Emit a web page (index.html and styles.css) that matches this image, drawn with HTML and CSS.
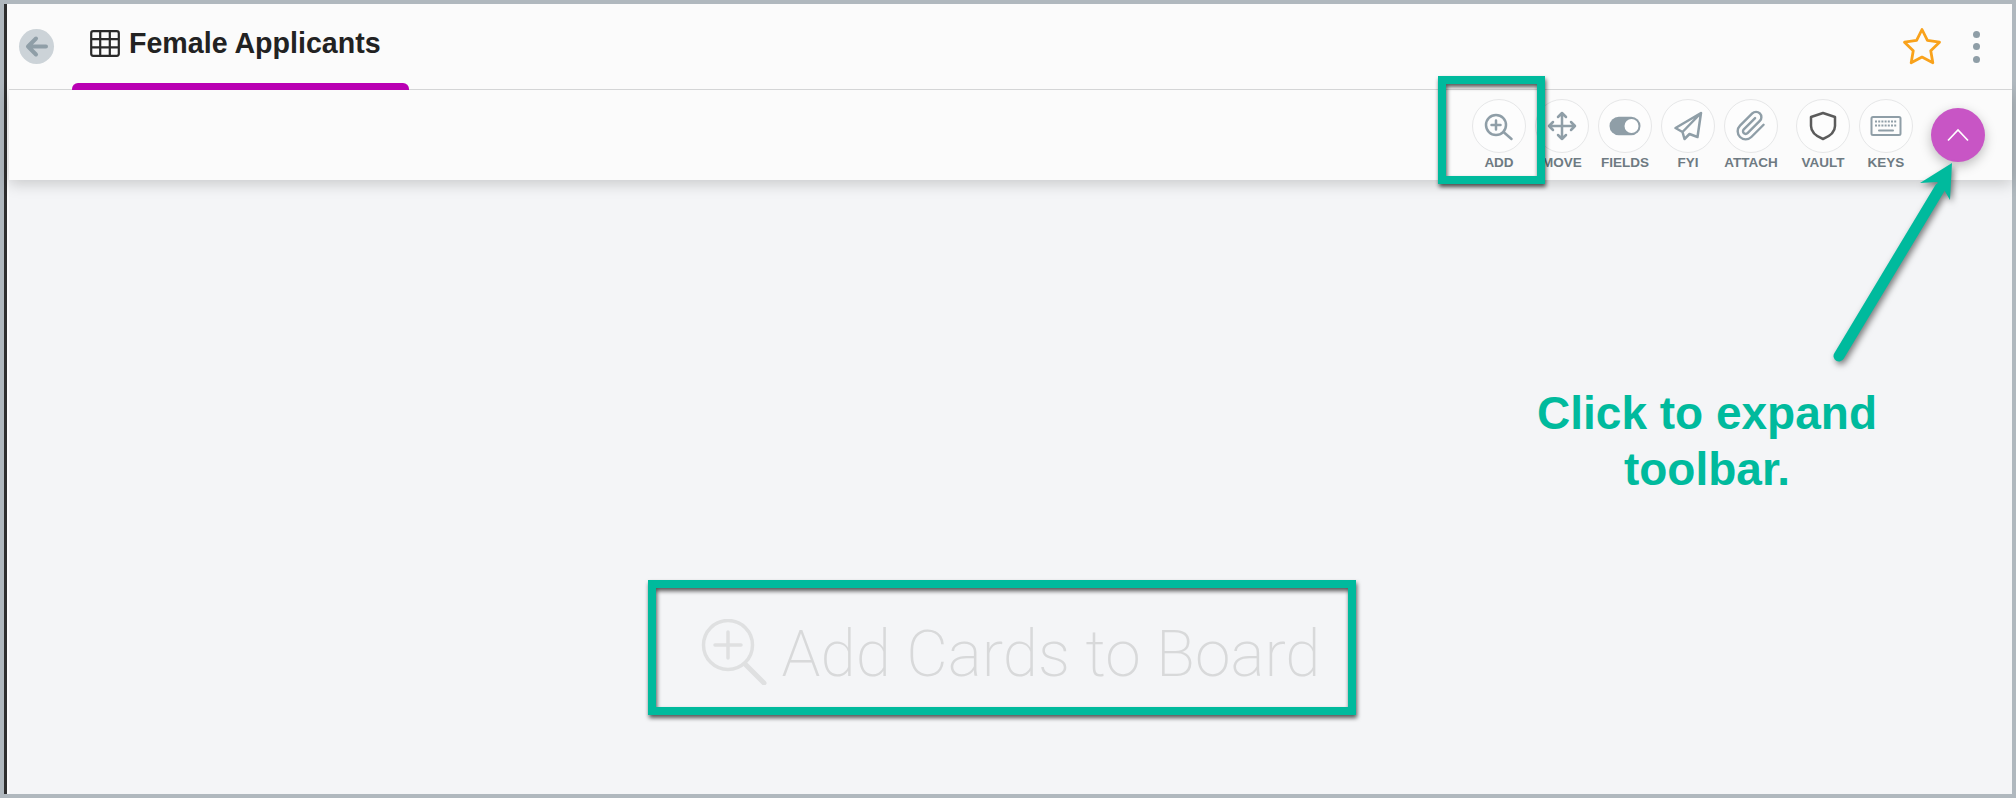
FILE: index.html
```html
<!DOCTYPE html>
<html lang="en">

<head>
    <meta charset="UTF-8">
    <title>Female Applicants</title>
    <link rel="stylesheet" href="styles.css">
</head>

<body>
    <div class="app">
        <header class="head">
            <button class="back">
                <svg width="25" height="25" viewBox="0 0 25 25"><path d="M22 12.5H4M12 4.5l-8 8 8 8" /></svg>
            </button>
            <div class="tab">
                <div class="tab-title">
                    <svg class="grid-icon" width="30" height="27" viewBox="0 0 30 27">
                        <rect x="1.2" y="1.2" width="27.6" height="24.6" rx="2" />
                        <path d="M1 9.2h28M1 17.4h28M10.2 1v25M19.8 1v25" />
                    </svg>
                    <h1>Female Applicants</h1>
                </div>
                <div class="tab-bar"></div>
            </div>
            <div class="head-right">
                <svg class="star" width="42" height="42" viewBox="0 0 24 24">
                    <polygon points="12 2 15.09 8.26 22 9.27 17 14.14 18.18 21.02 12 17.77 5.82 21.02 7 14.14 2 9.27 8.91 8.26 12 2" />
                </svg>
                <div class="dots"><span></span><span></span><span></span></div>
            </div>
        </header>

        <nav class="toolbar">
            <div class="tool">
                <div class="tool-icon">
                    <svg width="32" height="32" viewBox="0 0 32 32">
                        <circle cx="13" cy="15" r="10" />
                        <path d="M13 10.500v9M8.500 15h9M20.500 22l8 7" />
                    </svg>
                </div>
                <span>ADD</span>
            </div>
            <div class="tool">
                <div class="tool-icon">
                    <svg width="32" height="32" viewBox="0 0 32 32">
                        <path d="M3 16h26M16 3v26M12 7l4-4 4 4M12 25l4 4 4-4M7 12l-4 4 4 4M25 12l4 4-4 4" />
                    </svg>
                </div>
                <span>MOVE</span>
            </div>
            <div class="tool">
                <div class="tool-icon">
                    <svg width="32" height="32" viewBox="0 0 32 32">
                        <rect class="solid" x="0.5" y="6.7" width="31" height="18.6" rx="9.3" />
                        <circle class="knob" cx="22.5" cy="16" r="7" />
                    </svg>
                </div>
                <span>FIELDS</span>
            </div>
            <div class="tool">
                <div class="tool-icon">
                    <svg width="32" height="32" viewBox="0 0 32 32">
                        <path d="M29 3L3.5 18l7 4 2 7 5-5 8 3zM29 3L10.500 22" />
                    </svg>
                </div>
                <span>FYI</span>
            </div>
            <div class="tool tool-wide">
                <div class="tool-icon">
                    <svg width="32" height="32" viewBox="0 0 24 24">
                        <path class="thin" d="M21.44 11.05l-9.19 9.19a6 6 0 0 1-8.49-8.49l9.19-9.19a4 4 0 0 1 5.66 5.66l-9.2 9.19a2 2 0 0 1-2.83-2.83l8.49-8.48" />
                    </svg>
                </div>
                <span>ATTACH</span>
            </div>
            <div class="tool">
                <div class="tool-icon">
                    <svg class="shield" width="32" height="32" viewBox="0 0 32 32">
                        <path d="M16 3l12 4v9c0 7-7 11-12 13C11 27 4 23 4 16V7z" />
                    </svg>
                </div>
                <span>VAULT</span>
            </div>
            <div class="tool">
                <div class="tool-icon">
                    <svg width="32" height="32" viewBox="0 0 32 32">
                        <rect class="key-body" x="1.500" y="7" width="29" height="18" rx="1.500" />
                        <path class="key-row" d="M5 11.500h22M5 15.500h22" />
                        <path class="key-bar" d="M9 20.500h14" />
                    </svg>
                </div>
                <span>KEYS</span>
            </div>
            <button class="fab">
                <svg width="24" height="14" viewBox="0 0 24 14"><path d="M2 12.500L12 2l10 10.500" /></svg>
            </button>
        </nav>

        <main class="board">
            <div class="empty">
                <svg width="66" height="66" viewBox="0 0 66 66">
                    <circle cx="27" cy="26" r="24.500" />
                    <path d="M27 13v26M14 26h26" />
                    <path class="empty-handle" d="M45 46l18 18" />
                </svg>
                <span>Add Cards to Board</span>
            </div>
        </main>
    </div>

    <!-- annotations drawn over the screenshot -->
    <div class="callout callout-add"></div>
    <div class="callout callout-empty"></div>
    <svg class="arrow" width="140" height="210" viewBox="0 0 140 210">
        <path class="arrow-line" d="M9 198L110 30" />
        <path class="arrow-head" d="M122 5L90 25l17-1 6 6 7 12z" />
    </svg>
    <p class="hint">Click to expand<br>toolbar.</p>
</body>

</html>
```

FILE: styles.css
```css
* {
    box-sizing: border-box;
}

body {
    margin: 0;
    height: 798px;
    padding: 4px;
    background: #b0b8be;
    font-family: 'Liberation Sans', Arial, sans-serif;
    overflow: hidden;
}

svg {
    display: block;
}

button {
    border: none;
    padding: 0;
    cursor: pointer;
}

.app {
    display: flex;
    flex-direction: column;
    height: 790px;
    padding-left: 2px;
    background: #fbfbfb;
    border-left: 3px solid #2e2e2e;
}

.head {
    position: relative;
    z-index: 2;
    display: flex;
    height: 86px;
    background: #fbfbfb;
    border-bottom: 1px solid #d4d5d6;
}

.back {
    display: flex;
    align-items: center;
    justify-content: center;
    align-self: center;
    flex: none;
    width: 35px;
    height: 35px;
    margin-left: 9.500px;
    border-radius: 50%;
    background: #ccd3d8;

    path {
        fill: none;
        stroke: #8f9ea7;
        stroke-width: 4;
        stroke-linecap: round;
        stroke-linejoin: round;
    }
}

.tab {
    display: flex;
    flex-direction: column;
    width: 337px;
    margin-left: 18.500px;
    margin-bottom: -1px;
}

.tab-title {
    display: flex;
    flex: 1;
    align-items: center;
    gap: 9px;
    padding-left: 18px;

    h1 {
        margin: 0;
        font-size: 28.600px;
        font-weight: 700;
        color: #222;
    }
}

.grid-icon {
    rect,
    path {
        fill: none;
        stroke: #2a2a2a;
        stroke-width: 2.200;
    }
}

.tab-bar {
    height: 7px;
    background: #b900b3;
    border-radius: 6px 6px 0 0;
}

.head-right {
    display: flex;
    align-items: center;
    margin-left: auto;
    margin-right: 32px;
    gap: 30px;
}

.star polygon {
    fill: none;
    stroke: #f9a21b;
    stroke-width: 1.600;
    stroke-linejoin: round;
}

.dots {
    display: flex;
    flex-direction: column;
    gap: 5.500px;

    span {
        width: 7px;
        height: 7px;
        border-radius: 50%;
        background: #8f9ea7;
    }
}

.toolbar {
    position: relative;
    z-index: 1;
    display: flex;
    justify-content: flex-end;
    gap: 9px;
    height: 90px;
    padding: 9px 27px 0 0;
    background: #fbfbfb;
    box-shadow: 0 4px 14px rgba(0, 0, 0, 0.18);
}

.tool {
    display: flex;
    flex-direction: column;
    align-items: center;
    width: 54px;

    >span {
        font-size: 13.500px;
        line-height: 20px;
        font-weight: 700;
        color: #6e7a82;
        white-space: nowrap;
    }
}

.tool-wide {
    margin-right: 9px;
}

.tool-icon {
    display: flex;
    align-items: center;
    justify-content: center;
    width: 54px;
    height: 54px;
    border: 1px solid #e6e7e8;
    border-radius: 50%;
    background: #fdfdfd;

    svg * {
        fill: none;
        stroke: #8f9ea7;
        stroke-width: 2.500;
        stroke-linecap: round;
        stroke-linejoin: round;
    }

    .solid {
        fill: #8f9ea7;
        stroke: none;
    }

    .knob {
        fill: #fff;
        stroke: none;
    }

    .thin {
        stroke-width: 1.800;
    }

    .shield path {
        stroke: #5b5b5b;
    }

    .key-body {
        stroke-width: 2;
    }

    .key-row {
        stroke-width: 2;
        stroke-linecap: butt;
        stroke-dasharray: 2 1.200;
    }

    .key-bar {
        stroke-width: 2;
    }
}

.fab {
    display: flex;
    align-items: center;
    justify-content: center;
    width: 54px;
    height: 54px;
    margin: 9px 0 0 9px;
    border-radius: 50%;
    background: #c855c5;
    box-shadow: 0 4px 12px rgba(0, 0, 0, 0.25);

    path {
        fill: none;
        stroke: #fff;
        stroke-width: 1.700;
    }
}

.board {
    flex: 1;
    display: flex;
    justify-content: center;
    align-items: flex-start;
    padding-top: 439px;
    background: #f4f5f7;
}

.empty {
    display: flex;
    align-items: flex-start;
    gap: 15px;

    circle,
    path {
        fill: none;
        stroke: #dfe0e1;
        stroke-width: 3.500;
        stroke-linecap: round;
    }

    .empty-handle {
        stroke-width: 5;
    }

    span {
        margin-top: 2px;
        font-family: Roboto, 'Liberation Sans', sans-serif;
        font-size: 64px;
        line-height: 68px;
        font-weight: 200;
        color: #d8d9da;
        white-space: nowrap;
    }
}

.callout {
    position: absolute;
    z-index: 3;
    border: 8px solid #00ba9d;
    filter: drop-shadow(1px 3px 2px rgba(0, 0, 0, 0.65));
}

.callout-add {
    left: 1438px;
    top: 76px;
    width: 107px;
    height: 108px;
}

.callout-empty {
    left: 648px;
    top: 580px;
    width: 708px;
    height: 135px;
}

.arrow {
    position: absolute;
    z-index: 3;
    left: 1830px;
    top: 158px;
    filter: drop-shadow(2px 3px 3px rgba(0, 0, 0, 0.5));
}

.arrow-line {
    fill: none;
    stroke: #00ba9d;
    stroke-width: 11;
    stroke-linecap: round;
}

.arrow-head {
    fill: #00ba9d;
}

.hint {
    position: absolute;
    z-index: 3;
    left: 1507px;
    top: 385px;
    width: 400px;
    margin: 0;
    font-size: 46px;
    line-height: 56px;
    font-weight: 700;
    color: #00ba9d;
    text-align: center;
}
```
